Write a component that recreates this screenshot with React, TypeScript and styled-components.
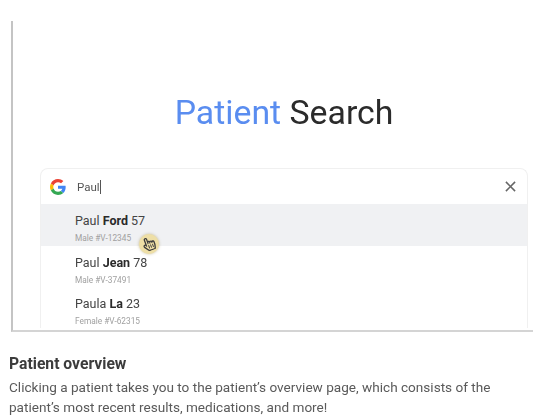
import React from 'react';
import styled, { createGlobalStyle } from 'styled-components';
import { FaRegHandPointer } from 'react-icons/fa';

const GlobalStyle = createGlobalStyle`
  html, body {
    margin: 0;
    padding: 0;
    background: #fff;
    font-family: Roboto, "Liberation Sans", sans-serif;
  }
`;

const Page = styled.div`
  width: 533px;
  height: 419px;
  overflow: hidden;
  padding-top: 21px;
  box-sizing: border-box;
  filter: blur(0.45px);
`;

const Frame = styled.section`
  height: 311px;
  margin-left: 11px;
  box-sizing: border-box;
  border-left: 2px solid #c4c4c4;
  border-bottom: 2px solid #d4d4d4;
  overflow: hidden;
  padding: 73px 5px 0 27px;
`;

const Title = styled.h1`
  margin: 0 0 36px;
  text-align: center;
  font-size: 33.8px;
  line-height: 38px;
  font-weight: 400;
  color: #2b2b2b;
  span {
    color: #5a8df0;
  }
`;

const Card = styled.div`
  border: 1px solid #f0f0f0;
  border-bottom: 0;
  border-radius: 8px 8px 0 0;
  background: #fff;
`;

const SearchBar = styled.div`
  height: 35px;
  display: flex;
  align-items: center;
  padding: 0 11px 0 9px;
`;

const Query = styled.div`
  flex: 1;
  margin-left: 11px;
  font-size: 11.5px;
  color: #555;
  span {
    border-right: 1px solid #555;
    padding-right: 0.5px;
  }
`;

const CloseIcon = styled.svg`
  width: 11px;
  height: 11px;
  stroke: #666;
  stroke-width: 1.7;
  fill: none;
`;

const Row = styled.div<{ $active?: boolean }>`
  position: relative;
  height: ${p => (p.$active ? '42px' : '41px')};
  box-sizing: border-box;
  padding: 8px 0 0 34px;
  background: ${p => (p.$active ? '#f0f1f3' : 'transparent')};
`;

const Name = styled.div`
  font-size: 12.5px;
  line-height: 18px;
  color: #444;
  b {
    font-weight: 700;
    color: #2a2a2a;
  }
`;

const Meta = styled.div`
  margin-top: 1.5px;
  font-size: 8.3px;
  line-height: 12px;
  color: #a0a0a0;
`;

const Cursor = styled.div`
  position: absolute;
  left: 98px;
  top: 30px;
  width: 20px;
  height: 20px;
  border-radius: 50%;
  background: #eedfa6;
  box-shadow: 0 0 3px rgba(150, 130, 60, 0.5);
  display: flex;
  align-items: center;
  justify-content: center;
  color: #3c3c3c;
  font-size: 14px;
  svg {
    transform: rotate(-20deg);
  }
`;

const Caption = styled.div`
  padding: 22px 0 0 9px;
`;

const CaptionTitle = styled.h2`
  margin: 0 0 4px;
  font-size: 15.7px;
  line-height: 19px;
  font-weight: 700;
  color: #3c3c3c;
`;

const CaptionText = styled.p`
  margin: 0;
  width: 510px;
  font-size: 13.58px;
  line-height: 20px;
  color: #5a5a5a;
`;

const GoogleLogo = () => (
  <svg width="16" height="16" viewBox="0 0 48 48">
    <path fill="#EA4335" d="M24 9.5c3.5 0 6.7 1.2 9.2 3.6l6.9-6.9C35.9 2.4 30.5 0 24 0 14.6 0 6.5 5.4 2.6 13.2l8 6.2C12.5 13.6 17.8 9.5 24 9.5z" />
    <path fill="#4285F4" d="M47 24.5c0-1.6-.1-3.100-.4-4.500H24v9h12.900c-.6 3-2.200 5.500-4.700 7.200l7.700 6C44.400 37.500 47 31.600 47 24.500z" />
    <path fill="#FBBC05" d="M10.600 28.600c-.5-1.400-.8-3-.8-4.600s.3-3.200.8-4.600l-8-6.200C.9 16.500 0 20.100 0 24s.9 7.500 2.600 10.800l8-6.200z" />
    <path fill="#34A853" d="M24 48c6.500 0 11.900-2.100 15.900-5.800l-7.700-6c-2.200 1.500-4.900 2.300-8.200 2.300-6.200 0-11.500-4.100-13.400-9.900l-8 6.200C6.500 42.600 14.600 48 24 48z" />
  </svg>
);

const patients = [
  { first: 'Paul', last: 'Ford', age: 57, meta: 'Male #V-12345', active: true },
  { first: 'Paul', last: 'Jean', age: 78, meta: 'Male #V-37491' },
  { first: 'Paula', last: 'La', age: 23, meta: 'Female #V-62315' },
];

const App = () => (
  <Page>
    <GlobalStyle />
    <Frame>
      <Title>
        <span>Patient</span> Search
      </Title>
      <Card>
        <SearchBar>
          <GoogleLogo />
          <Query>
            <span>Paul</span>
          </Query>
          <CloseIcon viewBox="0 0 12 12">
            <path d="M1 1l10 10M11 1L1 11" />
          </CloseIcon>
        </SearchBar>
        {patients.map(p => (
          <Row key={p.meta} $active={p.active}>
            <Name>
              {p.first} <b>{p.last}</b> {p.age}
            </Name>
            <Meta>{p.meta}</Meta>
            {p.active && (
              <Cursor>
                <FaRegHandPointer />
              </Cursor>
            )}
          </Row>
        ))}
      </Card>
    </Frame>
    <Caption>
      <CaptionTitle>Patient overview</CaptionTitle>
      <CaptionText>
        Clicking a patient takes you to the patient’s overview page, which consists of the patient’s most recent
        results, medications, and more!
      </CaptionText>
    </Caption>
  </Page>
);

export default App;
